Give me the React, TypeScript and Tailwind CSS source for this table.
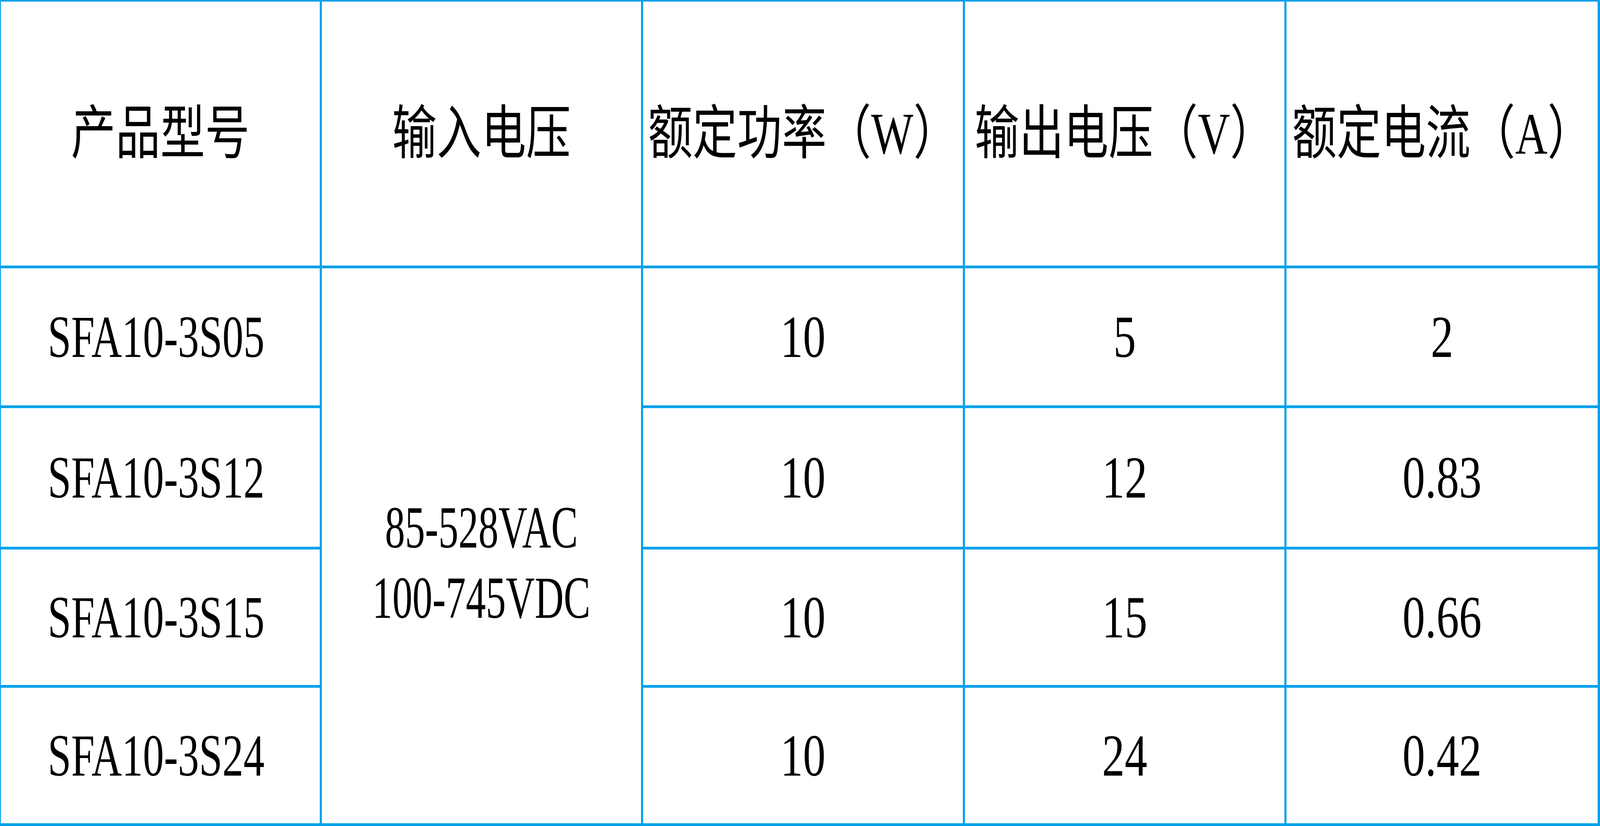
import { useState } from 'react';

const rows = [
  { model: 'SFA10-3S05', power: '10', vout: '5', amp: '2' },
  { model: 'SFA10-3S12', power: '10', vout: '12', amp: '0.83' },
  { model: 'SFA10-3S15', power: '10', vout: '15', amp: '0.66' },
  { model: 'SFA10-3S24', power: '10', vout: '24', amp: '0.42' },
];

const headers = ['产品型号', '输入电压', '额定功率（W）', '输出电压（V）', '额定电流（A）'];

// the table is drawn at 5374px; squeeze it when the window is narrower
const DESIGN_WIDTH = 5374;

export default function App() {
  const [sx] = useState(() =>
    typeof window === 'undefined' ? 1 : Math.min(1, window.innerWidth / DESIGN_WIDTH)
  );

  return (
    <div className="overflow-hidden">
      <div
        className="grid w-[5374px] h-[2115px] bg-[#00a0e9] gap-[7px] pt-[4px] pl-[3px] pr-[8px] pb-[7px] grid-cols-[1071px_1072px_1074px_1073px_1045px] grid-rows-[676px_351px_355px_347px_347px] text-black"
        style={{
          fontFamily: '"Liberation Serif", "Noto Sans CJK SC", serif',
          transform: `scaleX(${sx})`,
          transformOrigin: 'left top',
        }}
      >
        {headers.map((h) => (
          <div key={h} className="bg-white flex items-center justify-center text-[150px] leading-none whitespace-nowrap">
            {h}
          </div>
        ))}

        {rows.map((r, i) => (
          <Row key={r.model} row={r} first={i === 0} />
        ))}
      </div>
    </div>
  );
}

function Row({ row, first }: { row: (typeof rows)[number]; first: boolean }) {
  return (
    <>
      <div className="bg-white flex items-center justify-center text-[152px] leading-none whitespace-nowrap">
        <span className="inline-block scale-x-[0.93] pr-[30px]">{row.model}</span>
      </div>
      {first && (
        <div className="row-span-4 bg-white flex flex-col items-center justify-center pt-[86px] text-[152px] leading-[180px] whitespace-nowrap">
          <span className="inline-block scale-x-[0.885]">85-528VAC</span>
          <span className="inline-block scale-x-[0.885]">100-745VDC</span>
        </div>
      )}
      <Cell>{row.power}</Cell>
      <Cell>{row.vout}</Cell>
      <Cell>{row.amp}</Cell>
    </>
  );
}

function Cell({ children }: { children: React.ReactNode }) {
  return (
    <div className="bg-white flex items-center justify-center text-[152px] leading-none whitespace-nowrap">
      {children}
    </div>
  );
}
